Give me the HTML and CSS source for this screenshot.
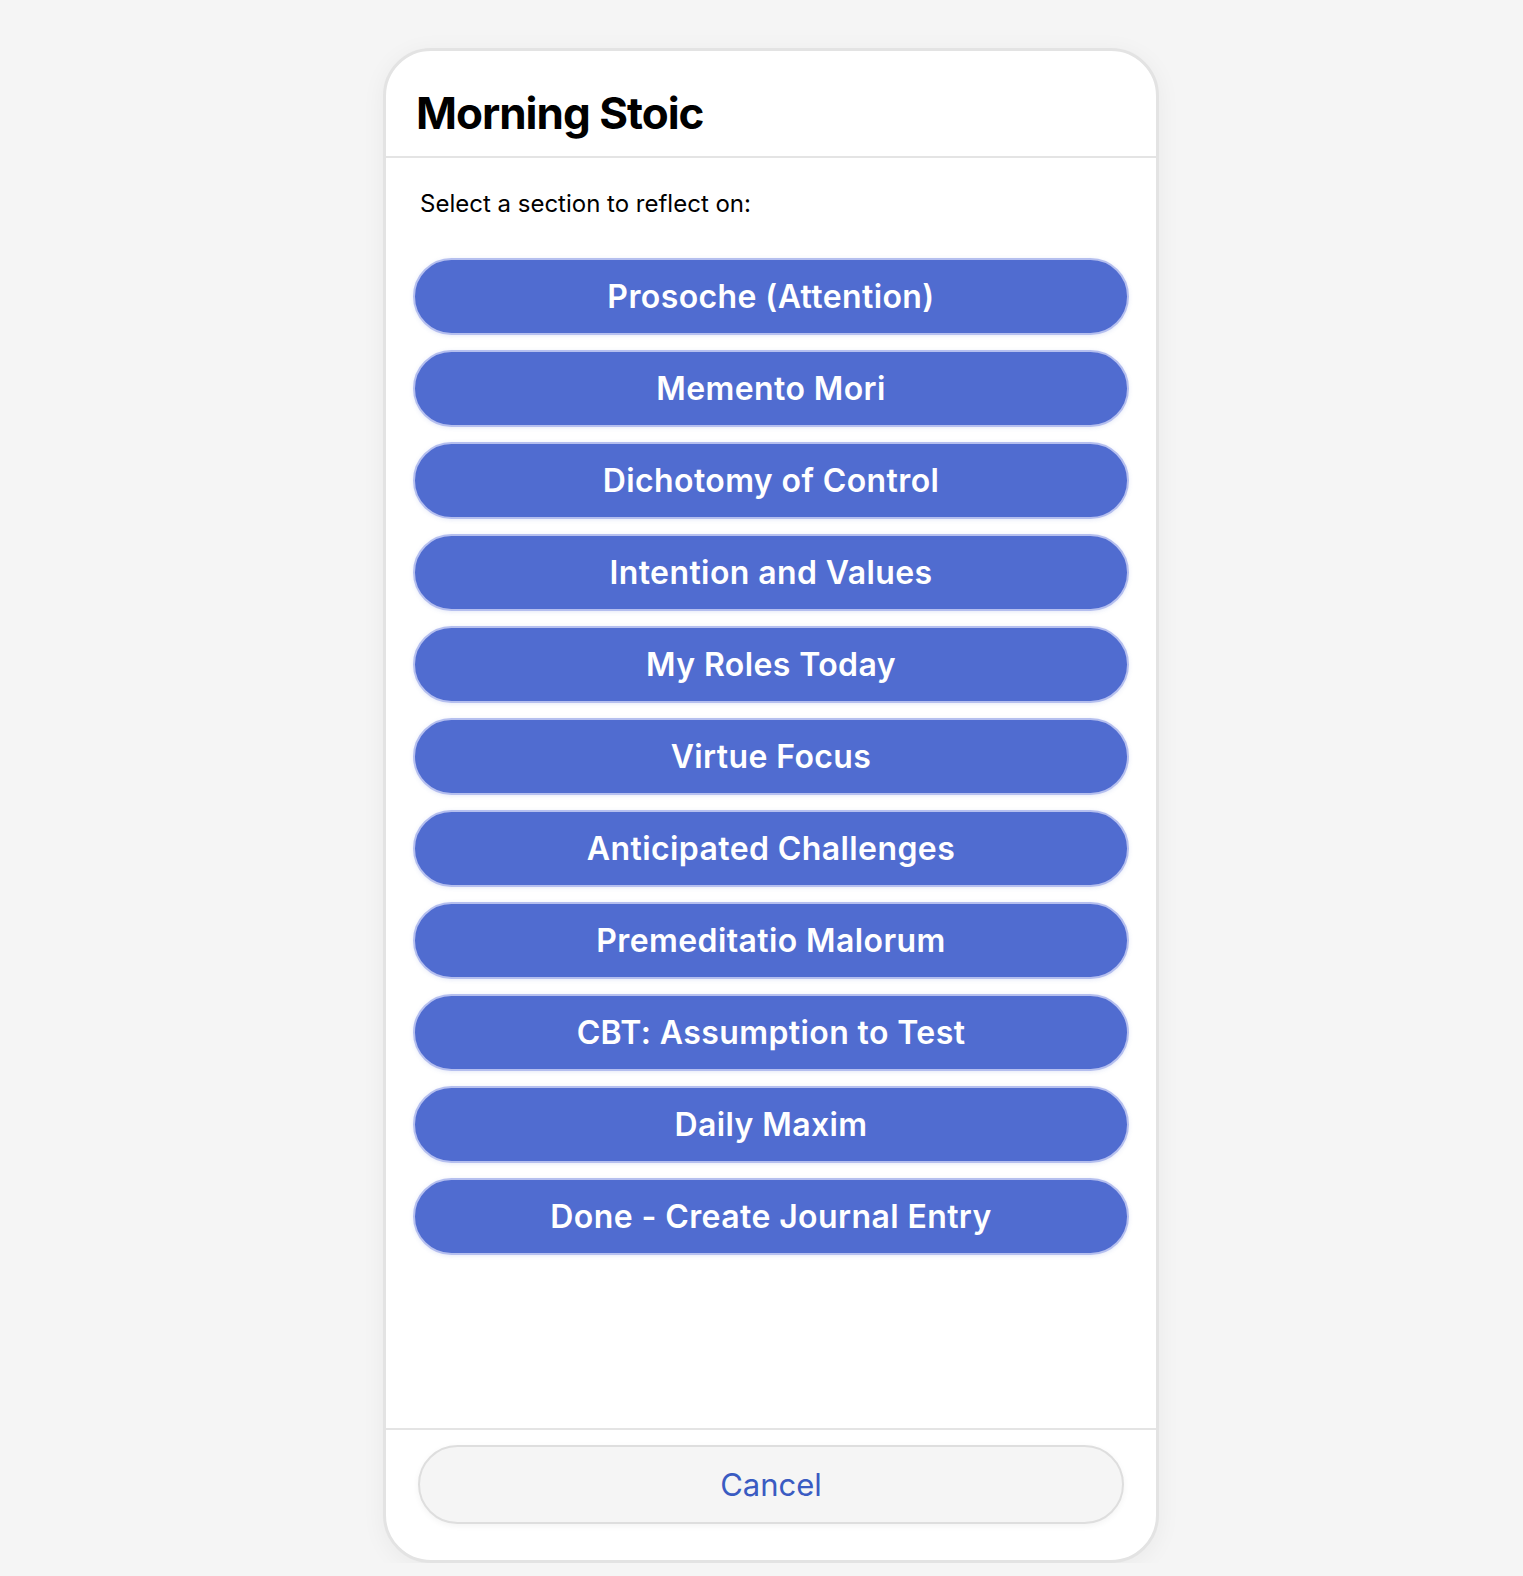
FILE: index.html
```html
<!DOCTYPE html>
<html lang="en">
<head>
<meta charset="utf-8">
<title>Morning Stoic</title>
<link rel="stylesheet" href="styles.css">
</head>
<body>
<div class="card">
  <div class="header">
    <h1 class="title">Morning Stoic</h1>
  </div>
  <div class="content">
    <p class="prompt">Select a section to reflect on:</p>
    <div class="list">
      <button class="section-btn">Prosoche (Attention)</button>
      <button class="section-btn">Memento Mori</button>
      <button class="section-btn">Dichotomy of Control</button>
      <button class="section-btn">Intention and Values</button>
      <button class="section-btn">My Roles Today</button>
      <button class="section-btn">Virtue Focus</button>
      <button class="section-btn">Anticipated Challenges</button>
      <button class="section-btn">Premeditatio Malorum</button>
      <button class="section-btn">CBT: Assumption to Test</button>
      <button class="section-btn">Daily Maxim</button>
      <button class="section-btn">Done - Create Journal Entry</button>
    </div>
  </div>
  <div class="footer">
    <button class="cancel-btn">Cancel</button>
  </div>
</div>
</body>
</html>
```

FILE: styles.css
```css
html, body {
  margin: 0;
  padding: 0;
}
body {
  background: #f5f5f5;
  font-family: "Inter", "Noto Sans", sans-serif;
  color: #000;
  padding-top: 48px;
  padding-left: 383px;
}
.card {
  box-sizing: border-box;
  width: 776px;
  height: 1515px;
  background: #fff;
  border: 3px solid #e3e3e3;
  border-radius: 48px;
  box-shadow: 0 4px 24px rgba(0, 0, 0, 0.05);
  display: flex;
  flex-direction: column;
  overflow: hidden;
}
.header {
  padding: 35px 30px 16px;
  border-bottom: 2px solid #e4e4e4;
}
.title {
  margin: 0;
  font-size: 44px;
  line-height: 54px;
  font-weight: 700;
  letter-spacing: -1px;
}
.content {
  flex: 1;
  padding: 31px 27px 0;
}
.prompt {
  margin: 0 0 40px 7px;
  font-size: 24px;
  line-height: 29px;
  font-weight: 400;
  letter-spacing: 0;
}
.list {
  display: flex;
  flex-direction: column;
  gap: 15px;
}
.section-btn {
  box-sizing: border-box;
  height: 77px;
  width: 100%;
  border: 2px solid #b5bfef;
  border-radius: 40px;
  background: #506cd0;
  color: #fff;
  font-family: inherit;
  font-size: 32px;
  font-weight: 600;
  letter-spacing: 0.4px;
  padding: 0;
  box-shadow: 0 1px 4px rgba(80, 108, 208, 0.15);
  cursor: pointer;
}
.footer {
  border-top: 2px solid #e4e4e4;
  padding: 15px 32px 36px;
}
.cancel-btn {
  box-sizing: border-box;
  display: block;
  width: 100%;
  height: 79px;
  border: 2px solid #dedede;
  border-radius: 40px;
  background: #f5f5f5;
  color: #3a5bc2;
  font-family: inherit;
  font-size: 31px;
  font-weight: 400;
  padding: 0;
  box-shadow: 0 2px 6px rgba(0, 0, 0, 0.05);
  cursor: pointer;
}
```
